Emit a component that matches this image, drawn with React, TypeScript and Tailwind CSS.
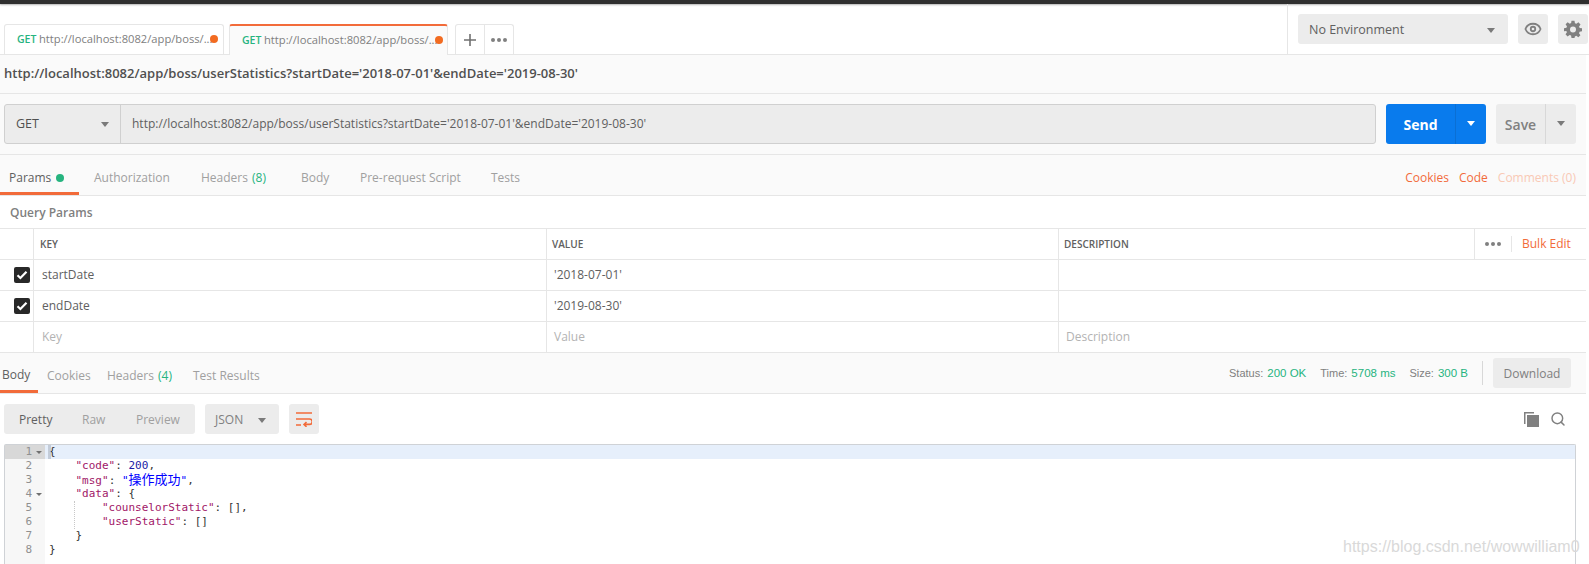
import { Eye, Search } from "lucide-react";

const ui = { fontFamily: '"Open Sans", "Noto Sans CJK SC", sans-serif' };

const Caret = ({ className = "border-t-[#7a7a7a]" }: { className?: string }) => (
  <span className={`w-0 h-0 border-x-[4px] border-x-transparent border-t-[5px] ${className}`} />
);

const Dots = () => (
  <span className="flex gap-[2px]">
    <span className="w-[4px] h-[4px] rounded-full bg-[#808080]" />
    <span className="w-[4px] h-[4px] rounded-full bg-[#808080]" />
    <span className="w-[4px] h-[4px] rounded-full bg-[#808080]" />
  </span>
);

const Check = () => (
  <span className="w-[16px] h-[16px] rounded-[2px] bg-[#282828] flex items-center justify-center">
    <svg width="12" height="10" viewBox="0 0 12 10" fill="none">
      <path d="M1.5 5.2 4.4 8 10.5 1.8" stroke="#fff" strokeWidth="2.2" />
    </svg>
  </span>
);

const Gear = () => (
  <svg width="18" height="18" viewBox="0 0 24 24" fill="#808080">
    <path
      fillRule="evenodd"
      d="M10 1h4l.6 3.2 1.9.8 2.7-1.9 2.8 2.8-1.9 2.7.8 1.9L24 11v4l-3.2.6-.8 1.9 1.9 2.7-2.8 2.8-2.7-1.9-1.9.8L14 24h-4l-.6-3.2-1.9-.8-2.7 1.9-2.8-2.8 1.9-2.7-.8-1.9L0 15v-4l3.2-.6.8-1.9-1.9-2.7 2.8-2.8 2.7 1.9 1.9-.8L10 1Zm2 7.5a4 4 0 1 0 0 8 4 4 0 0 0 0-8Z"
    />
  </svg>
);

const Tab = ({ active }: { active?: boolean }) => (
  <div
    className={`shrink-0 flex items-center pl-[12px] border-x border-[#e6e6e6] rounded-t-[3px] ${
      active
        ? "w-[219px] h-[31px] -mb-px bg-[#fafafa] border-t-[2px] border-t-[#f26b3a]"
        : "w-[220px] h-[30px] bg-white border-t"
    }`}
  >
    <span className="text-[10.5px] font-semibold text-[#26b47f] w-[22px] shrink-0">GET</span>
    <span className="text-[11.2px] text-[#808080] w-[171px] shrink-0 whitespace-nowrap">
      http://localhost:8082/app/boss/...
    </span>
    <span className="w-[8px] h-[8px] shrink-0 rounded-full bg-[#f26b21] -mt-[2px]" />
  </div>
);

const rows = [
  { key: "startDate", value: "'2018-07-01'" },
  { key: "endDate", value: "'2019-08-30'" },
];

const code: React.ReactNode[] = [
  <span className="text-[#333]">{"{"}</span>,
  <>
    {"    "}<span className="text-[#a11667]">"code"</span>: <span className="text-[#1a1aa6]">200</span>,
  </>,
  <>
    {"    "}<span className="text-[#a11667]">"msg"</span>:{" "}
    <span className="text-[#0000ff]">
      "<span className="text-[13px] leading-[14px]">操作成功</span>"
    </span>
    ,
  </>,
  <>
    {"    "}<span className="text-[#a11667]">"data"</span>: {"{"}
  </>,
  <>
    {"        "}<span className="text-[#a11667]">"counselorStatic"</span>: [],
  </>,
  <>
    {"        "}<span className="text-[#a11667]">"userStatic"</span>: []
  </>,
  <>{"    }"}</>,
  <>{"}"}</>,
];

export default function App() {
  return (
    <div className="relative w-[1589px] h-[564px] overflow-hidden bg-white text-[#505050]" style={ui}>
      <div className="h-[4px] bg-[#2f2f2f] shadow-[0_1px_2px_rgba(0,0,0,0.3)]" />

      {/* tabs + environment */}
      <div className="h-[51px] flex border-b border-[#e6e6e6]">
        <div className="w-[1288px] flex items-end pl-[4px] border-r border-[#e6e6e6]">
          <Tab />
          <div className="w-[5px] shrink-0" />
          <Tab active />
          <div className="flex ml-[7px] h-[30px] border border-b-0 border-[#e6e6e6] rounded-t-[3px]">
            <div className="w-[29px] flex items-center justify-center border-r border-[#e6e6e6]">
              <svg width="12" height="12" viewBox="0 0 12 12" stroke="#707070" strokeWidth="1.6">
                <path d="M6 0v12M0 6h12" />
              </svg>
            </div>
            <div className="w-[28px] flex items-center justify-center">
              <Dots />
            </div>
          </div>
        </div>
        <div className="flex items-start pt-[10px] pl-[10px]">
          <div className="w-[210px] h-[30px] pt-[2px] rounded-[3px] bg-[#ececec] flex items-center justify-between pl-[11px] pr-[13px] text-[12.5px] text-[#606060]">
            No Environment
            <Caret />
          </div>
          <div className="w-[30px] h-[30px] ml-[10px] rounded-[3px] bg-[#ececec] flex items-center justify-center">
            <Eye size={18} color="#808080" strokeWidth={2.4} />
          </div>
          <div className="w-[30px] h-[30px] ml-[10px] rounded-[3px] bg-[#ececec] flex items-center justify-center">
            <Gear />
          </div>
        </div>
      </div>

      <div className="w-[1586px]">
        <div className="bg-[#fafafa]">
          {/* request name */}
          <div className="h-[39px] flex items-center pl-[4px] text-[13px] font-semibold text-[#505050] border-b border-[#e6e6e6]">
            http://localhost:8082/app/boss/userStatistics?startDate='2018-07-01'&amp;endDate='2019-08-30'
          </div>

          {/* url bar */}
          <div className="h-[61px] pb-px flex items-center pl-[4px] border-b border-[#e6e6e6]">
            <div className="w-[1372px] h-[40px] flex bg-[#ececec] border border-[#d0d0d0] rounded-[3px]">
              <div className="w-[116px] pt-[2px] flex items-center justify-between pl-[11px] pr-[11px] border-r border-[#d0d0d0] text-[12.5px] text-[#505050]">
                GET
                <Caret />
              </div>
              <div className="flex-1 flex items-center pl-[11px] text-[12px] text-[#606060]">
                http://localhost:8082/app/boss/userStatistics?startDate='2018-07-01'&amp;endDate='2019-08-30'
              </div>
            </div>
            <div className="w-[100px] h-[40px] ml-[10px] flex rounded-[3px] bg-[#097bed] text-white">
              <div className="w-[69px] pt-[2px] flex items-center justify-center text-[14px] font-bold">Send</div>
              <div className="flex-1 flex items-center justify-center border-l border-[#0a6fd4]">
                <Caret className="border-t-white" />
              </div>
            </div>
            <div className="w-[80px] h-[40px] ml-[10px] flex rounded-[3px] bg-[#ececec] text-[#808080]">
              <div className="w-[49px] pt-[2px] flex items-center justify-center text-[14px] font-semibold">Save</div>
              <div className="flex-1 flex items-center justify-center border-l border-[#d8d8d8]">
                <Caret />
              </div>
            </div>
          </div>

          {/* request tabs */}
          <div className="h-[41px] flex items-center text-[12px] text-[#a0a0a0] border-b border-[#e6e6e6]">
            <div className="w-[79px] h-full pt-[8px] flex items-center pl-[9px] gap-[5px] text-[#606060] border-b-[3px] border-[#f26b3a]">
              Params
              <span className="w-[8px] h-[8px] rounded-full bg-[#26b47f]" />
            </div>
            <div className="flex-1 h-full pt-[5px] flex items-center">
              <span className="ml-[15px] w-[107px]">Authorization</span>
              <span className="w-[100px]">
                Headers <span className="ml-[1px] text-[#26b47f]">(8)</span>
              </span>
              <span className="w-[59px]">Body</span>
              <span className="w-[131px]">Pre-request Script</span>
              <span>Tests</span>
              <div className="ml-auto flex pr-[10px] pt-[1px]">
                <span className="text-[#f26b3a]">Cookies</span>
                <span className="ml-[10px] text-[#f26b3a]">Code</span>
                <span className="ml-[10px] text-[#f9c9b5]">Comments (0)</span>
              </div>
            </div>
          </div>
        </div>

        {/* params table */}
        <div className="h-[33px] pt-[1px] flex items-center pl-[10px] text-[12px] font-semibold text-[#808080] border-b border-[#e6e6e6]">
          Query Params
        </div>
        <div className="h-[31px] flex border-b border-[#e6e6e6] text-[10px] font-semibold text-[#606060]">
          <div className="w-[34px] border-r border-[#e6e6e6]" />
          <div className="w-[513px] flex items-center pl-[6px] border-r border-[#e6e6e6]">KEY</div>
          <div className="w-[512px] flex items-center pl-[5px] border-r border-[#e6e6e6]">VALUE</div>
          <div className="w-[416px] flex items-center pl-[5px] border-r border-[#e6e6e6]">DESCRIPTION</div>
          <div className="flex-1 flex items-center pl-[10px]">
            <Dots />
            <span className="ml-[10px] pl-[10px] border-l border-[#e6e6e6] text-[12px] leading-[16px] font-normal text-[#f26b3a]">
              Bulk Edit
            </span>
          </div>
        </div>
        {rows.map((r) => (
          <div key={r.key} className="h-[31px] flex border-b border-[#e6e6e6] text-[12px] text-[#606060]">
            <div className="w-[34px] flex items-center pl-[14px] border-r border-[#e6e6e6]">
              <Check />
            </div>
            <div className="w-[513px] flex items-center pl-[8px] border-r border-[#e6e6e6]">{r.key}</div>
            <div className="w-[512px] flex items-center pl-[7px] border-r border-[#e6e6e6]">{r.value}</div>
          </div>
        ))}
        <div className="h-[31px] flex border-b border-[#e6e6e6] text-[12px] text-[#b3b3b3]">
          <div className="w-[34px] border-r border-[#e6e6e6]" />
          <div className="w-[513px] flex items-center pl-[8px] border-r border-[#e6e6e6]">Key</div>
          <div className="w-[512px] flex items-center pl-[7px] border-r border-[#e6e6e6]">Value</div>
          <div className="w-[416px] flex items-center pl-[7px]">Description</div>
        </div>

        {/* response tabs */}
        <div className="h-[41px] flex items-center bg-[#fafafa] border-b border-[#e6e6e6] text-[12px] text-[#a0a0a0]">
          <div className="w-[38px] h-full pt-[7px] flex items-center pl-[2px] text-[#606060] border-b-[3px] border-[#f26b3a]">
            Body
          </div>
          <div className="flex-1 h-full flex items-center">
            <span className="ml-[9px] w-[60px] pt-[5px]">Cookies</span>
            <span className="w-[86px] pt-[5px]">
              Headers <span className="ml-[1px] text-[#26b47f]">(4)</span>
            </span>
            <span className="pt-[5px]">Test Results</span>
            <div className="ml-auto flex items-center pr-[15px]" style={{ fontFamily: '"Liberation Sans", sans-serif' }}>
              <div className="flex items-baseline pt-[2px] text-[11px]">
                <span className="text-[#808080]">Status:</span>
                <span className="ml-[4px] text-[11.5px] text-[#26b47f]">200 OK</span>
                <span className="ml-[14px] text-[#808080]">Time:</span>
                <span className="ml-[4px] text-[11.5px] text-[#26b47f]">5708 ms</span>
                <span className="ml-[14px] text-[#808080]">Size:</span>
                <span className="ml-[4px] text-[11.5px] text-[#26b47f]">300 B</span>
              </div>
              <span className="ml-[14px] w-px h-[24px] bg-[#d8d8d8]" />
              <span className="ml-[10px] pt-[2px] w-[78px] h-[30px] rounded-[3px] bg-[#ececec] flex items-center justify-center text-[12px] text-[#808080]" style={ui}>
                Download
              </span>
            </div>
          </div>
        </div>
      </div>

      {/* response toolbar */}
      <div className="h-[50px] flex items-center pl-[4px] text-[12px]">
        <div className="w-[191px] h-[30px] pt-[2px] flex items-center rounded-[3px] bg-[#ececec] text-[#a0a0a0]">
          <span className="w-[70px] pl-[15px] text-[#606060]">Pretty</span>
          <span className="w-[62px] pl-[8px]">Raw</span>
          <span>Preview</span>
        </div>
        <div className="w-[74px] h-[30px] pt-[2px] ml-[10px] flex items-center justify-between pl-[10px] pr-[13px] rounded-[3px] bg-[#ececec] text-[#808080]">
          JSON
          <Caret />
        </div>
        <div className="w-[30px] h-[30px] ml-[10px] flex items-center justify-center rounded-[3px] bg-[#ececec]">
          <svg width="16" height="16" viewBox="0 0 16 16" fill="none" stroke="#f26b3a" strokeWidth="1.6">
            <path d="M0 2h16M0 8h13.5a2.6 2.6 0 0 1 0 5.4H9M0 14h5M10.5 11 8 13.4l2.5 2.4" />
          </svg>
        </div>
        <div className="ml-auto flex items-center gap-[11px] pr-[23px]">
          <svg width="15" height="15" viewBox="0 0 15 15" fill="#808080">
            <path d="M0 0h10v1.5H1.5V12H0Z" />
            <path d="M3 3h12v12H3Z" />
          </svg>
          <Search size={16} color="#808080" strokeWidth={2.2} />
        </div>
      </div>

      {/* response body */}
      <div
        className="ml-[4px] w-[1572px] h-[120px] border border-b-0 border-[#cfd2d6] rounded-t-[2px] flex text-[11px] leading-[14px]"
        style={{ fontFamily: '"DejaVu Sans Mono", "Noto Sans CJK SC", monospace' }}
      >
        <div className="w-[40px] bg-[#f7f7f7] text-[#909090] shrink-0">
          {code.map((_, i) => (
            <div key={i} className={`h-[14px] flex items-center ${i === 0 ? "bg-[#d8d8d8]" : ""}`}>
              <span className="w-[27px] text-right">{i + 1}</span>
              {(i === 0 || i === 3) && (
                <span className="ml-[4px] w-0 h-0 border-x-[3px] border-x-transparent border-t-[3px] border-t-[#707070]" />
              )}
            </div>
          ))}
        </div>
        <div className="flex-1 text-[#333] relative">
          {code.map((line, i) => (
            <div key={i} className={`h-[14px] whitespace-pre pl-[4px] ${i === 0 ? "bg-[#e6effb]" : ""}`}>
              {line}
            </div>
          ))}
          <div className="absolute left-[3px] top-0 w-[3px] h-[14px] bg-[#b4bdcb] opacity-70" />
          <div className="absolute left-[29px] top-[56px] h-[28px] border-l border-dotted border-[#c8c8c8]" />
        </div>
      </div>

      <div className="absolute left-[1343px] top-[535px] text-[16px] text-[#d9d9d9]" style={{ fontFamily: '"Liberation Sans", sans-serif' }}>
        https://blog.csdn.net/wowwilliam0
      </div>
    </div>
  );
}
